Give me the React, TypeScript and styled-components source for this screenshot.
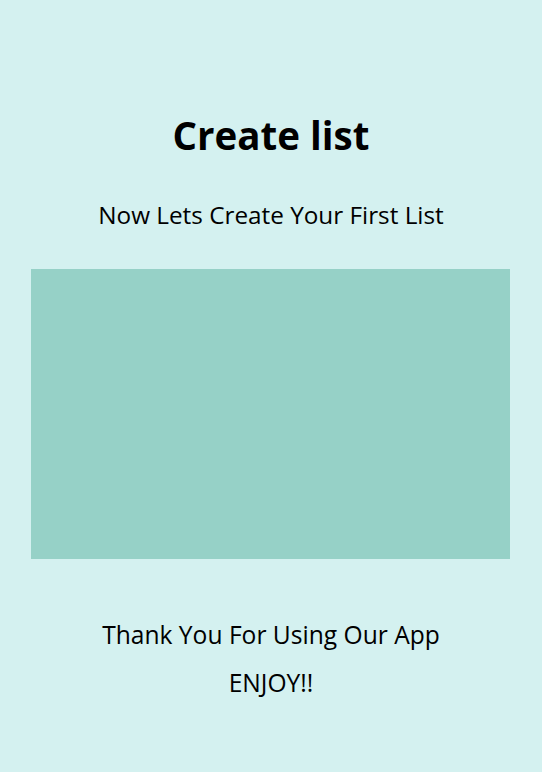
import React from "react";
import styled, { createGlobalStyle } from "styled-components";

const Global = createGlobalStyle`
  html, body { margin: 0; padding: 0; background: #d4f1f0; }
  body { font-family: "Open Sans", "Noto Sans", sans-serif; color: #000; }
`;

const Page = styled.div`
  width: 542px;
  min-height: 772px;
  display: flex;
  flex-direction: column;
  align-items: center;
  background: #d4f1f0;
`;

const Title = styled.h1`
  margin: 110px 0 0;
  font-size: 38.5px;
  font-weight: 700;
  line-height: 50px;
`;

const Subtitle = styled.p`
  margin: 39px 0 0;
  font-size: 24.3px;
  line-height: 32px;
`;

const Placeholder = styled.div`
  margin-top: 38px;
  width: 479px;
  height: 290px;
  background: #96d1c7;
  align-self: flex-start;
  margin-left: 31px;
`;

const Footer = styled.p`
  margin: 0;
  font-size: 24.6px;
  line-height: 48px;
  text-align: center;
`;

const FooterBlock = styled.div`
  margin-top: 52px;
  display: flex;
  flex-direction: column;
  align-items: center;
`;

export default function App() {
  return (
    <>
      <Global />
      <Page>
        <Title>Create list</Title>
        <Subtitle>Now Lets Create Your First List</Subtitle>
        <Placeholder />
        <FooterBlock>
          <Footer>Thank You For Using Our App</Footer>
          <Footer>ENJOY!!</Footer>
        </FooterBlock>
      </Page>
    </>
  );
}
